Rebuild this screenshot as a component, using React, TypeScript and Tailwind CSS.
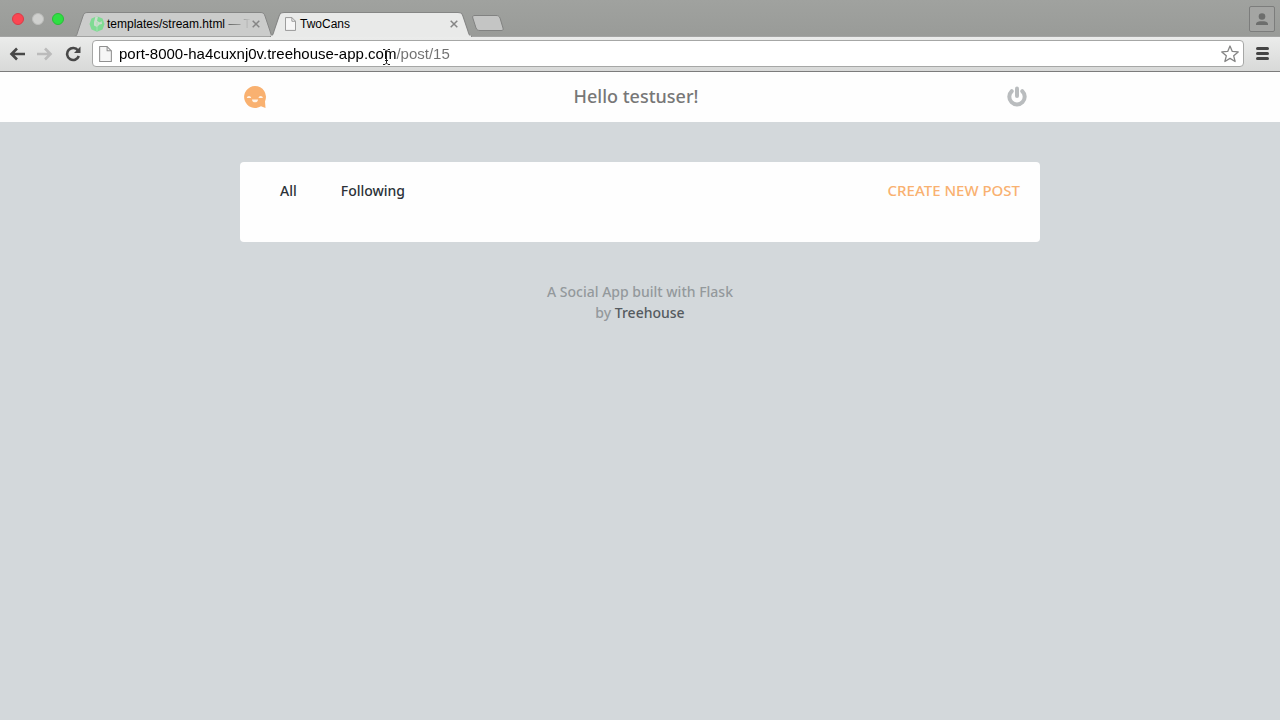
import type { ReactNode } from "react";

const feedLinks = [
  { name: "All", href: "#all" },
  { name: "Following", href: "#following" },
];

function PageIcon({ className }: { className: string }) {
  return (
    <svg viewBox="0 0 12 15" className={className} fill="#f6f6f6" stroke="#909090" strokeLinejoin="round">
      <path d="M1 .5h6.5l4 4v10H.5V.5z" />
      <path d="M7.5.5v4h4" fill="none" />
    </svg>
  );
}

function TreehouseIcon() {
  return (
    <svg viewBox="0 0 16 16" className="size-4 shrink-0">
      <path d="M8 .3l5.500 2.200L15.500 8l-2 5.500L8 15.700l-5.500-2.200L.5 8l2-5.500z" fill="#7fdb93" />
      <path d="M6.500.5l2.500 0-1 4.500 3 1.500 1.500-1.500.5 3-2.500.5L8 11l-3-1.500V6z" fill="#cbdccd" />
      <path d="M8 6v3.500M8 11v4" fill="none" stroke="#a5e0b1" />
    </svg>
  );
}

function Tab({ icon, title, rest, active }: { icon: ReactNode; title: string; rest?: string; active?: boolean }) {
  return (
    <div className={active ? "relative z-10 -ml-1 h-6 w-[202px]" : "relative h-6 w-[200px]"}>
      <svg viewBox="0 0 200 25" preserveAspectRatio="none" className="absolute inset-x-0 top-0 h-[25px] w-full">
        <path
          d="M0 24.500C3 24.500 3 22 4 19L9 4C10 1 11 .5 14 .5H186C189 .5 190 1 191 4L196 19C197 22 197 24.500 200 24.500"
          fill={active ? "#e9eae9" : "#cbcccb"}
          stroke="#858685"
        />
        {active && <path d="M1 24.500H199" stroke="#e9eae9" strokeWidth="2" />}
      </svg>
      <div className="relative flex h-6 items-center gap-0.5 pr-3 pl-[15px]">
        {icon}
        <button className="min-w-0 flex-1 text-left text-[12px] whitespace-nowrap text-black">
          {title}
          {rest && (
            <span className="bg-linear-to-r from-[#444] to-[#cbcccb] bg-clip-text text-transparent">{rest}</span>
          )}
        </button>
        <button aria-label="Close tab" className="flex size-3 shrink-0 items-center justify-center">
          <svg viewBox="0 0 8 8" className="size-2" stroke="#858585" strokeWidth="1.500">
            <path d="M.7.7l6.600 6.600M7.300.7L.7 7.300" />
          </svg>
        </button>
      </div>
    </div>
  );
}

function TabStrip() {
  return (
    <div className="flex h-9 bg-linear-to-b from-[#a0a29f] to-[#999b98] pl-3">
      <div className="flex h-[38px] items-center gap-2">
        <button aria-label="Close window" className="size-3 rounded-full border border-[#d83c48] bg-[#fb4652]" />
        <button aria-label="Minimize window" className="size-3 rounded-full border border-[#bcbdbb] bg-[#cfd0ce]" />
        <button aria-label="Zoom window" className="size-3 rounded-full border border-[#28bd38] bg-[#2fdf43]" />
      </div>
      <div className="ml-2.5 flex items-start pt-3">
        <Tab icon={<TreehouseIcon />} title="templates/stream.html" rest=" — T" />
        <Tab icon={<PageIcon className="mr-0.5 h-[14px] w-[11px] shrink-0" />} title="TwoCans" active />
        <button aria-label="New tab" className="mt-[3px]">
          <svg viewBox="0 0 32 17" className="h-[17px] w-8">
            <path
              d="M3 .5H24C26 .5 27 1 28 3L31 13C31.500 15 31 15.500 29 15.500H8C6 15.500 5 15 4 13L.8 3C.2 1 1 .5 3 .5z"
              fill="#c4c5c4"
              stroke="#818281"
            />
          </svg>
        </button>
      </div>
      <button
        aria-label="Profile"
        className="mt-1.5 mr-[5px] ml-auto flex size-[26px] items-center justify-center rounded-xs border border-[#7c7d7c] bg-[#a4a5a3]"
      >
        <svg viewBox="0 0 14 14" className="size-[14px]" fill="#6d6e6d">
          <circle cx="7" cy="4.500" r="3.300" />
          <path d="M1 13v-1C1 10 3.500 9.300 5 9.200h4c1.500.1 4 .8 4 2.800v1z" />
        </svg>
      </button>
    </div>
  );
}

function Toolbar() {
  return (
    <div className="relative flex h-9 items-center border-t border-b border-t-[#a3a4a3] border-b-[#7c7c7c] bg-linear-to-b from-[#ebeceb] to-[#d8d9d8] pr-[11px] pb-px pl-[9px]">
      <button aria-label="Back">
        <svg viewBox="0 0 16 14" className="h-[14px] w-4" fill="none" stroke="#484848" strokeWidth="2.600">
          <path d="M8 1.500L2.500 7 8 12.500M2 7h14" />
        </svg>
      </button>
      <button aria-label="Forward" className="ml-3">
        <svg viewBox="0 0 16 14" className="h-[14px] w-4" fill="none" stroke="#bbb" strokeWidth="2.600">
          <path d="M8 1.500L13.500 7 8 12.500M14 7H0" />
        </svg>
      </button>
      <button aria-label="Reload" className="ml-3">
        <svg viewBox="0 0 16 16" className="size-4">
          <path d="M13 4.500A6 6 0 1 0 13.800 10" fill="none" stroke="#484848" strokeWidth="2.600" />
          <path d="M15.500.5v6.500H9z" fill="#484848" />
        </svg>
      </button>
      <div className="ml-[11px] flex h-[27px] flex-1 items-center rounded-sm border border-[#a6a7a6] bg-white pr-1 pl-1.5">
        <PageIcon className="h-4 w-[13px] shrink-0" />
        <input
          aria-label="Address"
          defaultValue="port-8000-ha4cuxnj0v.treehouse-app.com/post/15"
          className="ml-[7px] h-6 min-w-0 flex-1 bg-linear-to-r from-black from-[277px] to-[#707070] to-[277px] bg-clip-text text-[15px] text-transparent outline-none"
        />
        <button aria-label="Bookmark this page">
          <svg viewBox="0 0 18 18" className="size-[18px]" fill="#fff" stroke="#858585" strokeWidth="1.300" strokeLinejoin="round">
            <path d="M9 1l2.300 5.400 5.900.5-4.500 3.900 1.400 5.700L9 13.400l-5.100 3.100 1.400-5.700L.8 6.900l5.900-.5z" />
          </svg>
        </button>
      </div>
      <button aria-label="Menu" className="ml-3 flex w-[13px] flex-col gap-0.5">
        <span className="h-[3px] rounded-full bg-[#444]" />
        <span className="h-[3px] rounded-full bg-[#444]" />
        <span className="h-[3px] rounded-full bg-[#444]" />
      </button>
      {/* text cursor */}
      <svg viewBox="0 0 9 16" className="absolute top-3 left-[382px] h-4 w-[9px]" fill="none" stroke="#222">
        <path d="M1 .5h2l1.500 1.500L6 .5h2M4.500 2v12M1 15.500h2L4.500 14 6 15.500h2M3 11.500h3" />
      </svg>
    </div>
  );
}

function SiteHeader() {
  return (
    <header className="bg-[#fefefe]">
      <div className="mx-auto flex h-[50px] max-w-[800px] items-center justify-between pr-3 pl-1">
        <a href="#home" aria-label="TwoCans home">
          <svg viewBox="0 0 22 22" className="size-[22px]">
            <path d="M11 0a11 11 0 0 1 10 15.500L21.500 22l-4.500-1.700A11 11 0 1 1 11 0z" fill="#f9b170" />
            <path d="M2.800 12c.3-2.700 4.100-2.700 4.400 0zM14.500 12c.3-2.700 4.100-2.700 4.400 0zM8 13.500h6c0 3.800-6 3.800-6 0z" fill="#fff4e8" />
          </svg>
        </a>
        <h1 className="pb-0.5 text-[18px] font-medium text-[#777]">Hello testuser!</h1>
        <a href="#logout" aria-label="Log out">
          <svg viewBox="0 0 22 22" className="size-[22px]" fill="none" stroke="#b9bcbe" strokeLinecap="round">
            <path d="M5.700 5.200a7.700 7.700 0 1 0 10.600 0" strokeWidth="4" />
            <path d="M11 2.500v7.500" strokeWidth="4" />
          </svg>
        </a>
      </div>
    </header>
  );
}

export default function App() {
  return (
    <div className="min-h-screen bg-[#d3d8db] font-['Noto_Sans','Open_Sans',sans-serif]">
      <div className="font-['Liberation_Sans',Arial,sans-serif]">
        <TabStrip />
        <Toolbar />
      </div>
      <SiteHeader />
      <main className="mx-auto mt-10 max-w-[800px]">
        <nav className="flex h-20 items-start rounded-sm bg-[#fefefe] px-5 pt-[18px] text-[14px] leading-[22px]">
          <ul className="flex gap-11 pl-5 font-medium text-[#2b3137]">
            {feedLinks.map((link) => (
              <li key={link.name}>
                <a href={link.href}>{link.name}</a>
              </li>
            ))}
          </ul>
          <a href="#new_post" className="ml-auto text-[15px] leading-5 font-medium text-[#f9b170] uppercase">
            Create New Post
          </a>
        </nav>
      </main>
      <footer className="mt-[39px] text-center text-[14px] leading-[21px] font-medium text-[#93999c]">
        <p>A Social App built with Flask</p>
        <p>
          by{" "}
          <a href="#treehouse" className="text-[#555b60]">
            Treehouse
          </a>
        </p>
      </footer>
    </div>
  );
}
